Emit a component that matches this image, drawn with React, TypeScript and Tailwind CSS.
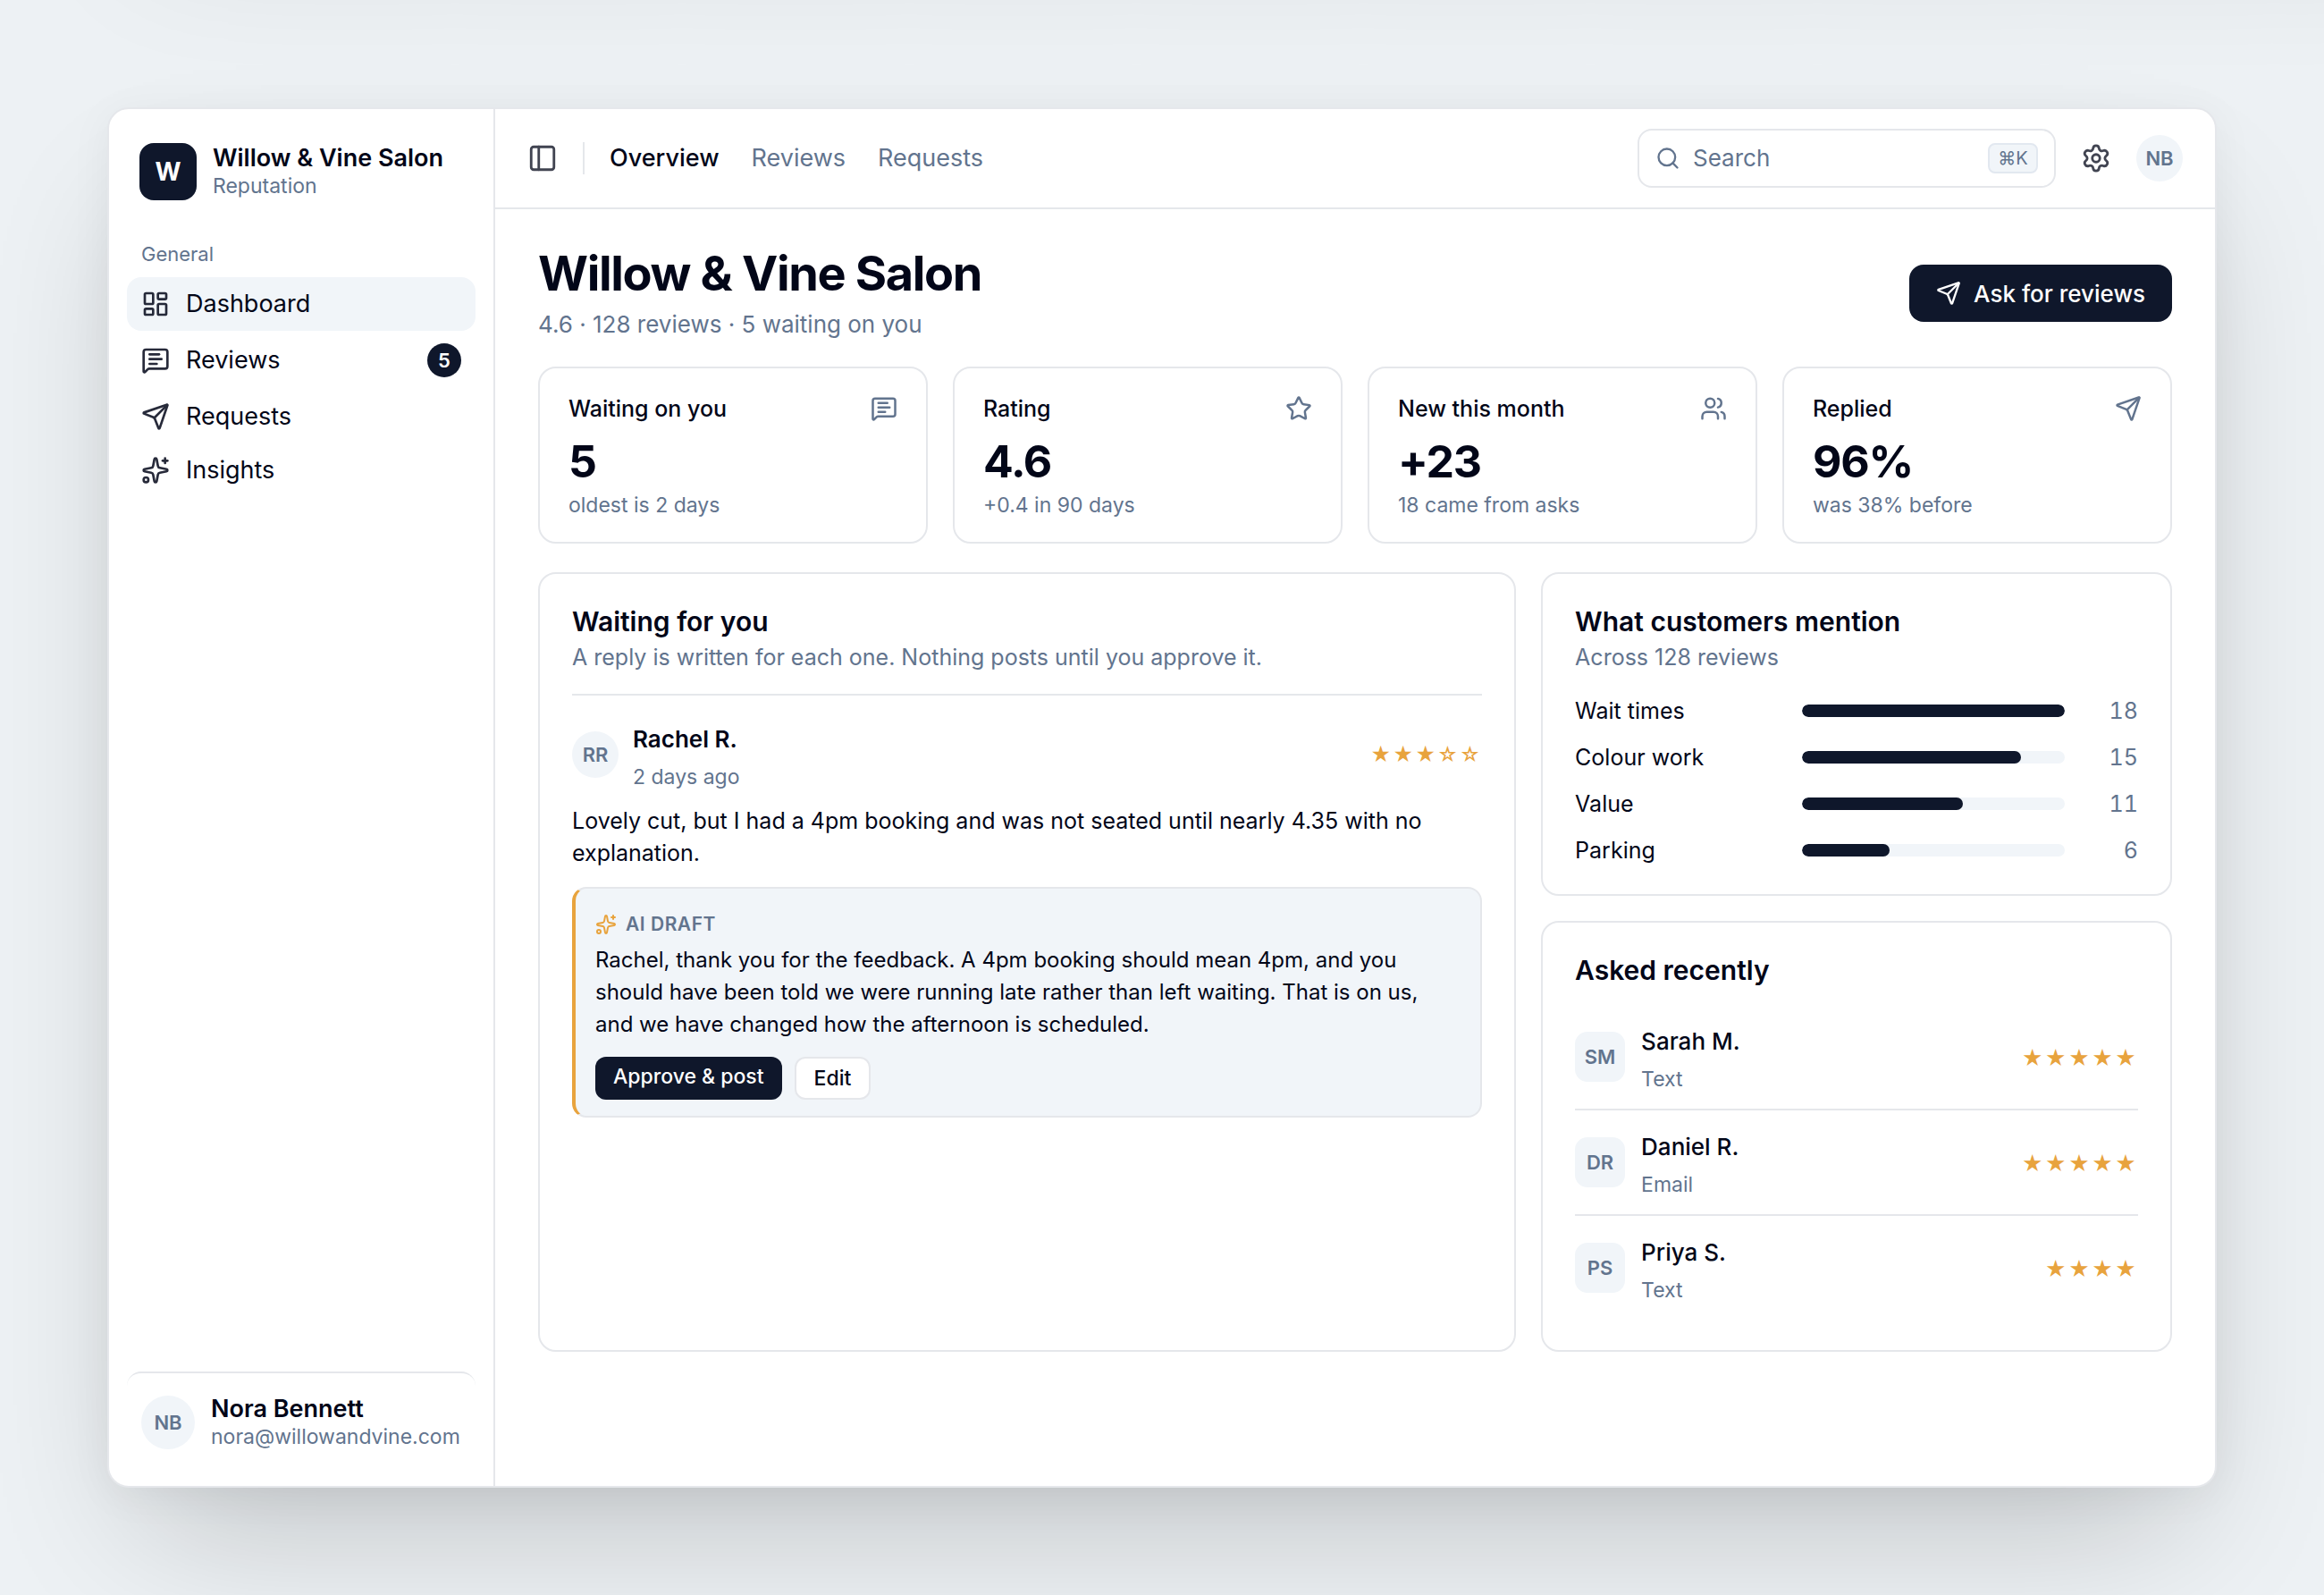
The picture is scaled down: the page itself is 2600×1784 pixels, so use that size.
import type { LucideIcon } from 'lucide-react';
import {
  LayoutDashboard,
  MessageSquareText,
  PanelLeft,
  Search,
  Send,
  Settings,
  Sparkles,
  Star,
  Users,
} from 'lucide-react';

type NavItem = { label: string; icon: LucideIcon; active?: boolean; count?: number };

const navItems: NavItem[] = [
  { label: 'Dashboard', icon: LayoutDashboard, active: true },
  { label: 'Reviews', icon: MessageSquareText, count: 5 },
  { label: 'Requests', icon: Send },
  { label: 'Insights', icon: Sparkles },
];

const tabs = ['Overview', 'Reviews', 'Requests'];

const stats: { label: string; value: string; note: string; icon: LucideIcon }[] = [
  { label: 'Waiting on you', value: '5', note: 'oldest is 2 days', icon: MessageSquareText },
  { label: 'Rating', value: '4.6', note: '+0.4 in 90 days', icon: Star },
  { label: 'New this month', value: '+23', note: '18 came from asks', icon: Users },
  { label: 'Replied', value: '96%', note: 'was 38% before', icon: Send },
];

const mentions = [
  { label: 'Wait times', count: 18 },
  { label: 'Colour work', count: 15 },
  { label: 'Value', count: 11 },
  { label: 'Parking', count: 6 },
];

const asked = [
  { initials: 'SM', name: 'Sarah M.', channel: 'Text', stars: 5 },
  { initials: 'DR', name: 'Daniel R.', channel: 'Email', stars: 5 },
  { initials: 'PS', name: 'Priya S.', channel: 'Text', stars: 4 },
];

const frameShadow = 'shadow-[0_80px_160px_-40px_rgb(0_0_0/0.2),0_8px_48px_rgb(0_0_0/0.05)]';

function Sidebar() {
  return (
    <aside className="flex w-[432px] shrink-0 flex-col border-r-2 border-gray-200 px-5 py-7">
      <div className="flex items-center gap-[18px] px-[14px] py-[10px]">
        <div className="flex size-16 items-center justify-center rounded-2xl bg-slate-900 text-[28px] font-bold text-white">
          W
        </div>
        <div>
          <div className="text-[27px] leading-[32px] font-semibold">Willow &amp; Vine Salon</div>
          <div className="text-[23px] leading-[30px] text-slate-500">Reputation</div>
        </div>
      </div>

      <div className="mt-9 px-4 text-[22px] leading-7 text-slate-500">General</div>
      <nav className="mt-3 flex flex-col">
        {navItems.map(({ label, icon: Icon, active, count }) => (
          <a
            key={label}
            href="#"
            className={`flex items-center gap-[18px] rounded-2xl px-4 py-[14px] text-[27px] leading-8 ${active ? 'bg-slate-100' : ''}`}
          >
            <Icon className="size-8 opacity-85" />
            {label}
            {count && (
              <span className="ml-auto flex size-[38px] items-center justify-center rounded-full bg-slate-900 text-[22px] font-semibold text-white">
                {count}
              </span>
            )}
          </a>
        ))}
      </nav>

      <div className="mt-auto flex items-center gap-[18px] rounded-2xl border-t-2 border-gray-200 px-4 pt-6 pb-3">
        <div className="flex size-[60px] items-center justify-center rounded-full bg-slate-100 text-[22px] font-semibold text-slate-500">
          NB
        </div>
        <div>
          <div className="text-[27px] leading-[32px] font-semibold">Nora Bennett</div>
          <div className="text-[23px] leading-[30px] text-slate-500">nora@willowandvine.com</div>
        </div>
      </div>
    </aside>
  );
}

function TopBar() {
  return (
    <header className="flex h-28 items-center gap-7 border-b-2 border-gray-200 px-9">
      <button aria-label="Toggle sidebar">
        <PanelLeft className="size-[34px] opacity-75" />
      </button>
      <div className="h-9 w-[2px] bg-gray-200" />
      <nav className="flex gap-9 text-[27px] leading-[34px]">
        {tabs.map((tab, i) => (
          <a key={tab} href="#" className={i === 0 ? 'font-medium' : 'text-slate-500'}>
            {tab}
          </a>
        ))}
      </nav>
      <label className="ml-auto flex h-[66px] w-[468px] items-center gap-[14px] rounded-2xl border-2 border-gray-200 px-[18px] text-slate-500">
        <Search className="size-7 shrink-0" />
        <input
          type="search"
          aria-label="Search"
          placeholder="Search"
          className="min-w-0 flex-1 bg-transparent text-[26px] leading-[34px] outline-none placeholder:text-slate-500"
        />
        <kbd className="flex h-[34px] w-14 items-center justify-center rounded-lg border-2 border-slate-200 bg-slate-100 font-[Inter,sans-serif] text-[20px]">
          ⌘K
        </kbd>
      </label>
      <button aria-label="Settings">
        <Settings className="size-[34px] opacity-75" />
      </button>
      <button className="flex size-[52px] items-center justify-center rounded-full bg-slate-100 text-[22px] font-semibold text-slate-500">
        NB
      </button>
    </header>
  );
}

function StatCard({ label, value, note, icon: Icon }: (typeof stats)[number]) {
  return (
    <div className="rounded-[20px] border-2 border-gray-200 px-8 pt-7 pb-6">
      <div className="flex items-center justify-between">
        <span className="text-[25px] leading-[34px] font-medium">{label}</span>
        <Icon className="size-[30px] text-slate-500" />
      </div>
      <div className="mt-3 text-[50px] leading-[60px] font-bold tracking-tight">{value}</div>
      <div className="mt-[2px] text-[23px] leading-[34px] text-slate-500">{note}</div>
    </div>
  );
}

function CardHeading({ title, description }: { title: string; description?: string }) {
  return (
    <div>
      <h2 className="text-[30px] leading-[38px] font-semibold">{title}</h2>
      {description && <p className="mt-[2px] text-[25px] leading-[38px] text-slate-500">{description}</p>}
    </div>
  );
}

function WaitingCard() {
  return (
    <section className="rounded-[20px] border-2 border-gray-200 px-9 py-[34px]">
      <CardHeading title="Waiting for you" description="A reply is written for each one. Nothing posts until you approve it." />
      <article className="mt-[22px] border-t-2 border-gray-200 pt-6">
        <div className="flex items-center gap-4">
          <div className="flex size-[52px] items-center justify-center rounded-full bg-slate-100 text-[22px] font-semibold text-slate-500">
            RR
          </div>
          <div>
            <div className="text-[26px] leading-[50px] font-semibold">Rachel R.</div>
            <div className="text-[23px] leading-[34px] text-slate-500">2 days ago</div>
          </div>
          <span className="ml-auto text-[22px] tracking-[2px] text-[#e8a33d]" aria-label="3 out of 5 stars">
            ★★★☆☆
          </span>
        </div>
        <p className="mt-[14px] text-[25px] leading-9">
          Lovely cut, but I had a 4pm booking and was not seated until nearly 4.35 with no explanation.
        </p>

        <div className="mt-5 rounded-2xl border-2 border-l-4 border-gray-200 border-l-[#e8a33d] bg-slate-100 px-[22px] pt-6 pb-[18px]">
          <div className="flex items-center gap-[10px] text-[21px] leading-8 font-semibold tracking-wide text-slate-500">
            <Sparkles className="size-6 text-[#e8a33d]" />
            AI DRAFT
          </div>
          <p className="mt-[6px] text-[24px] leading-9">
            Rachel, thank you for the feedback. A 4pm booking should mean 4pm, and you should have been told we were
            running late rather than left waiting. That is on us, and we have changed how the afternoon is scheduled.
          </p>
          <div className="mt-[18px] flex gap-[14px] text-[23px] leading-7 font-medium">
            <button className="h-12 rounded-xl bg-slate-900 px-5 pb-1 text-white">Approve &amp; post</button>
            <button className="h-12 rounded-xl border-2 border-gray-200 bg-white px-5">Edit</button>
          </div>
        </div>
      </article>
    </section>
  );
}

function MentionsCard() {
  const max = Math.max(...mentions.map(m => m.count));
  return (
    <section className="rounded-[20px] border-2 border-gray-200 px-9 pt-[34px] pb-[30px]">
      <CardHeading title="What customers mention" description="Across 128 reviews" />
      <div className="mt-[22px] flex flex-col gap-[14px]">
        {mentions.map(m => (
          <div key={m.label} className="grid grid-cols-[240px_1fr_68px] items-center gap-[14px] text-[25px] leading-[38px]">
            <span>{m.label}</span>
            <div className="h-[14px] overflow-hidden rounded-full bg-slate-100">
              <div className="h-full rounded-full bg-slate-900" style={{ width: `${(m.count / max) * 100}%` }} />
            </div>
            <span className="text-right text-slate-500 tabular-nums">{m.count}</span>
          </div>
        ))}
      </div>
    </section>
  );
}

function AskedCard() {
  return (
    <section className="rounded-[20px] border-2 border-gray-200 px-9 py-[34px]">
      <CardHeading title="Asked recently" />
      <ul className="mt-5 divide-y-2 divide-gray-200">
        {asked.map(a => (
          <li key={a.initials} className="flex items-center gap-[18px] py-4">
            <div className="flex size-14 items-center justify-center rounded-[14px] bg-slate-100 text-[22px] font-semibold text-slate-500">
              {a.initials}
            </div>
            <div>
              <div className="text-[26px] leading-[50px] font-medium">{a.name}</div>
              <div className="text-[23px] leading-[34px] text-slate-500">{a.channel}</div>
            </div>
            <span className="ml-auto pt-1 text-[23px] tracking-[2px] text-[#e8a33d]" aria-label={`${a.stars} stars`}>
              {'★'.repeat(a.stars)}
            </span>
          </li>
        ))}
      </ul>
    </section>
  );
}

function App() {
  return (
    <div className="relative flex min-h-screen flex-col overflow-hidden bg-[#edf1f4] p-[120px] font-[Inter,sans-serif] text-slate-950">
      {/* soft shade falling in from above the page */}
      <div className={`absolute -top-[520px] -right-60 left-[120px] h-[400px] ${frameShadow}`} />

      <div className={`relative flex flex-1 overflow-hidden rounded-3xl border-2 border-gray-200 bg-white ${frameShadow}`}>
        <Sidebar />
        <div className="flex min-w-0 flex-1 flex-col">
          <TopBar />
          <main className="flex flex-col px-12 pt-10 pb-12">
            <div className="flex items-center justify-between">
              <div>
                <h1 className="text-[54px] leading-[64px] font-bold tracking-tight">Willow &amp; Vine Salon</h1>
                <p className="mt-[6px] text-[26px] leading-[38px] text-slate-500">4.6 · 128 reviews · 5 waiting on you</p>
              </div>
              <button className="flex h-16 items-center gap-[14px] rounded-2xl bg-slate-900 px-[30px] text-[26px] font-medium text-white">
                <Send className="size-7" />
                Ask for reviews
              </button>
            </div>

            <div className="mt-7 grid grid-cols-4 gap-7">
              {stats.map(s => (
                <StatCard key={s.label} {...s} />
              ))}
            </div>

            <div className="mt-8 grid grid-cols-[1.55fr_1fr] gap-7">
              <WaitingCard />
              <div className="flex flex-col gap-7">
                <MentionsCard />
                <AskedCard />
              </div>
            </div>
          </main>
        </div>
      </div>
    </div>
  );
}

export default App;
